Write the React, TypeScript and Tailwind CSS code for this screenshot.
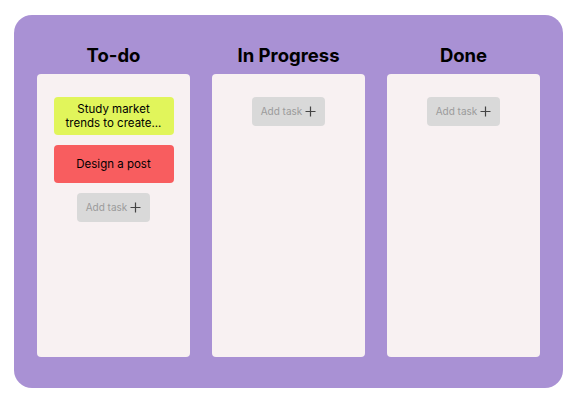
import React from "react";

type Task = { text: string; color: string };

const columns: { title: string; tasks: Task[] }[] = [
  {
    title: "To-do",
    tasks: [
      { text: "Study market trends to create...", color: "bg-[#e1f55b]" },
      { text: "Design a post", color: "bg-[#f85d5f]" },
    ],
  },
  { title: "In Progress", tasks: [] },
  { title: "Done", tasks: [] },
];

function AddTask() {
  return (
    <button className="flex items-center gap-[3px] h-[29px] px-[9px] rounded-[4px] bg-[#d9d9d9] text-[10px] text-[#9b9b9b]">
      Add task
      <svg width="11" height="11" viewBox="0 0 11 11">
        <path d="M5.5 0.5v10M0.5 5.5h10" stroke="#444" strokeWidth="1.2" />
      </svg>
    </button>
  );
}

export default function App() {
  return (
    <div
      className="w-[573px] h-[400px] bg-white pt-[15px] pl-[14px]"
      style={{ fontFamily: "Inter, 'Open Sans', sans-serif" }}
    >
      <div className="w-[549px] h-[373px] rounded-[18px] bg-[#a991d4] px-[23px] pb-[31px] flex gap-[22px]">
        {columns.map((col) => (
          <div key={col.title} className="flex-1 flex flex-col">
            <h2 className="h-[59px] pt-[29px] text-center text-[18.5px] font-bold leading-[22px] text-black">
              {col.title}
            </h2>
            <div className="flex-1 rounded-[4px] bg-[#f8f1f2] pt-[23px] flex flex-col items-center gap-[10px]">
              {col.tasks.map((t) => (
                <div
                  key={t.text}
                  className={`w-[120px] h-[38px] rounded-[4px] ${t.color} flex items-center justify-center text-center text-[11.5px] leading-[14px] text-black px-2`}
                >
                  {t.text}
                </div>
              ))}
              <AddTask />
            </div>
          </div>
        ))}
      </div>
    </div>
  );
}
